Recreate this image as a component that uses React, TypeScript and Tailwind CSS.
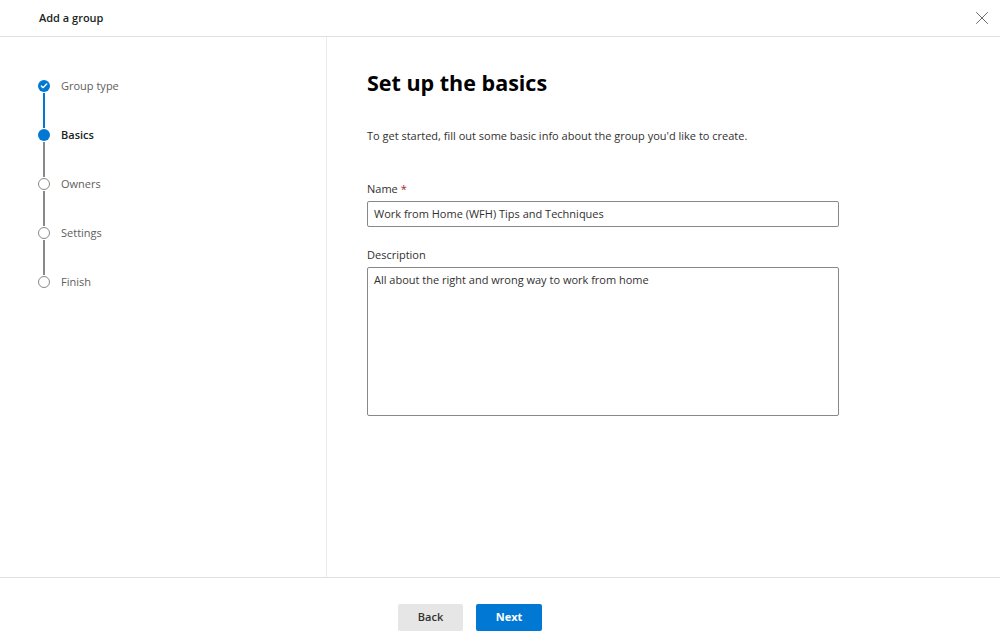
import { Check, X } from 'lucide-react';

const steps = [
  { label: 'Group type', state: 'done' },
  { label: 'Basics', state: 'current' },
  { label: 'Owners', state: 'todo' },
  { label: 'Settings', state: 'todo' },
  { label: 'Finish', state: 'todo' },
];

function StepDot({ state }: { state: string }) {
  if (state === 'done') {
    return (
      <div className="w-[12px] h-[12px] rounded-full bg-[#0078d4] flex items-center justify-center">
        <Check className="w-[8px] h-[8px] text-white" strokeWidth={4} />
      </div>
    );
  }
  if (state === 'current') {
    return <div className="w-[12px] h-[12px] rounded-full bg-[#0078d4]" />;
  }
  return <div className="w-[12px] h-[12px] rounded-full border-[1.5px] border-[#8a8886] bg-white" />;
}

export default function App() {
  return (
    <div
      className="w-[1000px] h-[644px] flex flex-col bg-white text-[#323130]"
      style={{ fontFamily: '"Open Sans", "Noto Sans", sans-serif' }}
    >
      {/* Header */}
      <div className="h-[37px] shrink-0 border-b border-[#e1dfdd] flex items-center justify-between pl-[39px] pr-[7px]">
        <span className="text-[11px] font-semibold text-[#201f1e]">Add a group</span>
        <X className="w-[22px] h-[22px] text-[#605e5c]" strokeWidth={1} />
      </div>

      {/* Body */}
      <div className="flex-1 flex min-h-0">
        <div className="w-[327px] shrink-0 border-r border-[#edebe9] pt-[43px] pl-[38px]">
          {steps.map((s, i) => (
            <div key={s.label}>
              <div className="flex items-center gap-[11px] h-[12px]">
                <StepDot state={s.state} />
                <span className={`text-[11px] ${s.state === 'current' ? 'text-[#201f1e] font-semibold' : 'text-[#605e5c]'}`}>
                  {s.label}
                </span>
              </div>
              {i < steps.length - 1 && (
                <div className="w-[12px] flex justify-center py-[1px]">
                  <div className={`w-[2px] h-[35px] ${s.state === 'done' ? 'bg-[#0078d4]' : 'bg-[#8a8886]'}`} />
                </div>
              )}
            </div>
          ))}
        </div>

        <div className="flex-1 pl-[40px] pt-[30px]">
          <h1 className="text-[21.5px] font-bold text-black leading-[32px]">Set up the basics</h1>
          <p className="mt-[29px] text-[11px] text-[#323130] leading-[16px]">
            To get started, fill out some basic info about the group you'd like to create.
          </p>

          <div className="mt-[37px]">
            <label className="block text-[11px] font-medium text-[#323130] leading-[16px]">
              Name <span className="text-[#a4262c]">*</span>
            </label>
            <div className="mt-[4px] w-[472px] h-[26px] border border-[#8a8886] rounded-[2px] px-[6px] flex items-center text-[11px] text-[#323130]">
              Work from Home (WFH) Tips and Techniques
            </div>
          </div>

          <div className="mt-[20px]">
            <label className="block text-[11px] font-medium text-[#323130] leading-[16px]">Description</label>
            <div className="mt-[4px] w-[472px] h-[149px] border border-[#8a8886] rounded-[2px] px-[6px] pt-[4px] text-[11px] text-[#323130]">
              All about the right and wrong way to work from home
            </div>
          </div>
        </div>
      </div>

      {/* Footer */}
      <div className="h-[67px] shrink-0 border-t border-[#e1dfdd] flex items-start pt-[26px] pl-[398px] gap-[13px]">
        <button className="w-[65px] h-[27px] rounded-[2px] bg-[#e6e6e6] text-[11px] font-semibold text-[#323130]">
          Back
        </button>
        <button className="w-[66px] h-[27px] rounded-[2px] bg-[#0078d4] text-[11px] font-bold text-white">
          Next
        </button>
      </div>
    </div>
  );
}
